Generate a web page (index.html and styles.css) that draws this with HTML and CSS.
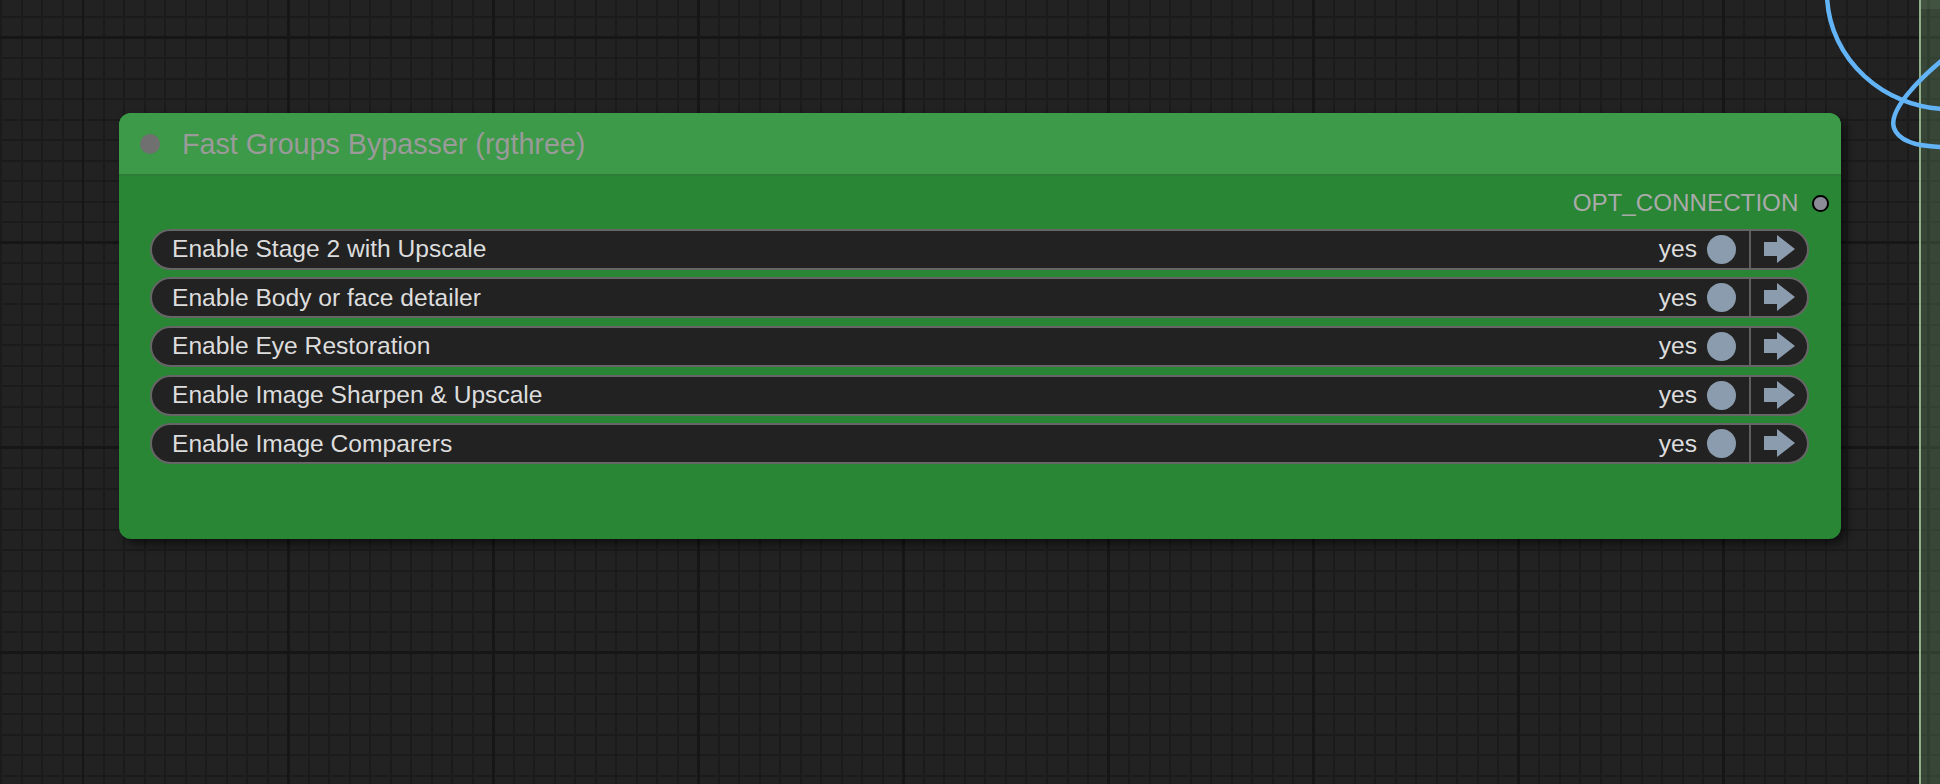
FILE: index.html
```html
<!DOCTYPE html>
<html>
<head>
<meta charset="utf-8">
<title>Fast Groups Bypasser</title>
<link rel="stylesheet" href="styles.css">
</head>
<body>
<div class="canvas">
  <div class="group"><div class="group-title"></div></div>
  <svg class="links" width="1940" height="784" viewBox="0 0 1940 784">
    <path d="M 1827 -4 C 1829 60, 1885 108, 1946 109" />
    <path d="M 1946 57 C 1920 78, 1888 110, 1894 128 C 1899 142, 1920 147, 1946 147" />
  </svg>
  <div class="node">
    <div class="node-header">
      <span class="title-dot"></span>
      <span class="title">Fast Groups Bypasser (rgthree)</span>
    </div>
    <div class="node-body">
      <div class="output">
        <span class="output-label">OPT_CONNECTION</span>
        <span class="output-dot"></span>
      </div>
      <div class="rows">
        <div class="row">
          <span class="label">Enable Stage 2 with Upscale</span>
          <span class="value">yes</span>
          <span class="toggle"></span>
          <span class="nav"><svg class="arrow" width="31" height="28" viewBox="0 0 31 28"><polygon points="0,7 13,7 13,0 31,14 13,28 13,21 0,21"/></svg></span>
        </div>
        <div class="row">
          <span class="label">Enable Body or face detailer</span>
          <span class="value">yes</span>
          <span class="toggle"></span>
          <span class="nav"><svg class="arrow" width="31" height="28" viewBox="0 0 31 28"><polygon points="0,7 13,7 13,0 31,14 13,28 13,21 0,21"/></svg></span>
        </div>
        <div class="row">
          <span class="label">Enable Eye Restoration</span>
          <span class="value">yes</span>
          <span class="toggle"></span>
          <span class="nav"><svg class="arrow" width="31" height="28" viewBox="0 0 31 28"><polygon points="0,7 13,7 13,0 31,14 13,28 13,21 0,21"/></svg></span>
        </div>
        <div class="row">
          <span class="label">Enable Image Sharpen &amp; Upscale</span>
          <span class="value">yes</span>
          <span class="toggle"></span>
          <span class="nav"><svg class="arrow" width="31" height="28" viewBox="0 0 31 28"><polygon points="0,7 13,7 13,0 31,14 13,28 13,21 0,21"/></svg></span>
        </div>
        <div class="row">
          <span class="label">Enable Image Comparers</span>
          <span class="value">yes</span>
          <span class="toggle"></span>
          <span class="nav"><svg class="arrow" width="31" height="28" viewBox="0 0 31 28"><polygon points="0,7 13,7 13,0 31,14 13,28 13,21 0,21"/></svg></span>
        </div>
      </div>
    </div>
  </div>
</div>
</body>
</html>
```

FILE: styles.css
```css
html, body {
  margin: 0;
  padding: 0;
  width: 100%;
  height: 100%;
  overflow: hidden;
}

body {
  font-family: "Liberation Sans", Arial, sans-serif;
  background-color: #222222;
  background-image:
    repeating-linear-gradient(90deg, transparent 0 81.5px, #161616 81.5px 84.5px, transparent 84.5px 205.1px),
    repeating-linear-gradient(180deg, transparent 0 36px, #161616 36px 39px, transparent 39px 205.1px),
    repeating-linear-gradient(90deg, #1b1b1b 0 2px, transparent 2px 20.51px),
    repeating-linear-gradient(180deg, transparent 0 16px, #1b1b1b 16px 18px, transparent 18px 20.51px);
}

.canvas {
  position: relative;
  width: 1940px;
  height: 784px;
  overflow: hidden;
}

/* group box at the right edge of the canvas */
.group {
  position: absolute;
  left: 1919px;
  top: -60px;
  width: 300px;
  height: 1000px;
  border-left: 2px solid #8fae8a;
  background: rgba(120, 170, 120, 0.27);
}

.group-title {
  height: 69px;
  background: rgba(140, 180, 140, 0.12);
}

.links {
  position: absolute;
  left: 0;
  top: 0;
  pointer-events: none;
}

.links path {
  fill: none;
  stroke: #62b4f6;
  stroke-width: 4.5;
  stroke-linecap: round;
}

/* node */
.node {
  position: absolute;
  left: 119px;
  top: 113px;
  width: 1722px;
  height: 426px;
  border-radius: 12px;
  background: #288634;
  box-shadow: 5px 5px 10px rgba(0, 0, 0, 0.55);
  display: flex;
  flex-direction: column;
}

.node-header {
  height: 61px;
  flex: 0 0 auto;
  background: #3d9a48;
  border-radius: 12px 12px 0 0;
  border-bottom: 2px solid #2d7c37;
  display: flex;
  align-items: center;
  padding-left: 21px;
}

.title-dot {
  width: 20px;
  height: 20px;
  border-radius: 50%;
  background: #707070;
  margin-right: 22px;
  flex: 0 0 auto;
}

.title {
  font-size: 28.7px;
  color: #9a9a9a;
  white-space: nowrap;
  margin-top: 1px;
}

.node-body {
  flex: 1 1 auto;
  display: flex;
  flex-direction: column;
}

.output {
  height: 52.5px;
  box-sizing: border-box;
  padding-top: 2px;
  padding-right: 12.5px;
  display: flex;
  align-items: center;
  justify-content: flex-end;
}

.output-label {
  font-size: 24.2px;
  color: #aaaaaa;
  margin-right: 13.5px;
  white-space: nowrap;
}

.output-dot {
  width: 12.6px;
  height: 12.6px;
  border-radius: 50%;
  background: #8c8c99;
  border: 2px solid #000;
  flex: 0 0 auto;
}

.rows {
  display: flex;
  flex-direction: column;
  gap: 7.7px;
  padding: 0 32px 0 31px;
}

.row {
  height: 41px;
  box-sizing: border-box;
  border: 2px solid #666666;
  border-radius: 21px;
  background: #222222;
  display: flex;
  align-items: center;
  padding-left: 20px;
  color: #dddddd;
  font-size: 24.6px;
}

.label {
  flex: 1 1 auto;
  white-space: nowrap;
}

.value {
  white-space: nowrap;
  margin-right: 10px;
}

.toggle {
  width: 29px;
  height: 29px;
  border-radius: 50%;
  background: #8b9cae;
  margin-right: 13px;
  flex: 0 0 auto;
}

.nav {
  align-self: stretch;
  width: 56px;
  border-left: 2px solid #5e5e5e;
  display: flex;
  align-items: center;
  justify-content: center;
  flex: 0 0 auto;
}

.arrow {
  display: block;
  margin-top: -1px;
}

.arrow polygon {
  fill: #8b9cae;
}
```
